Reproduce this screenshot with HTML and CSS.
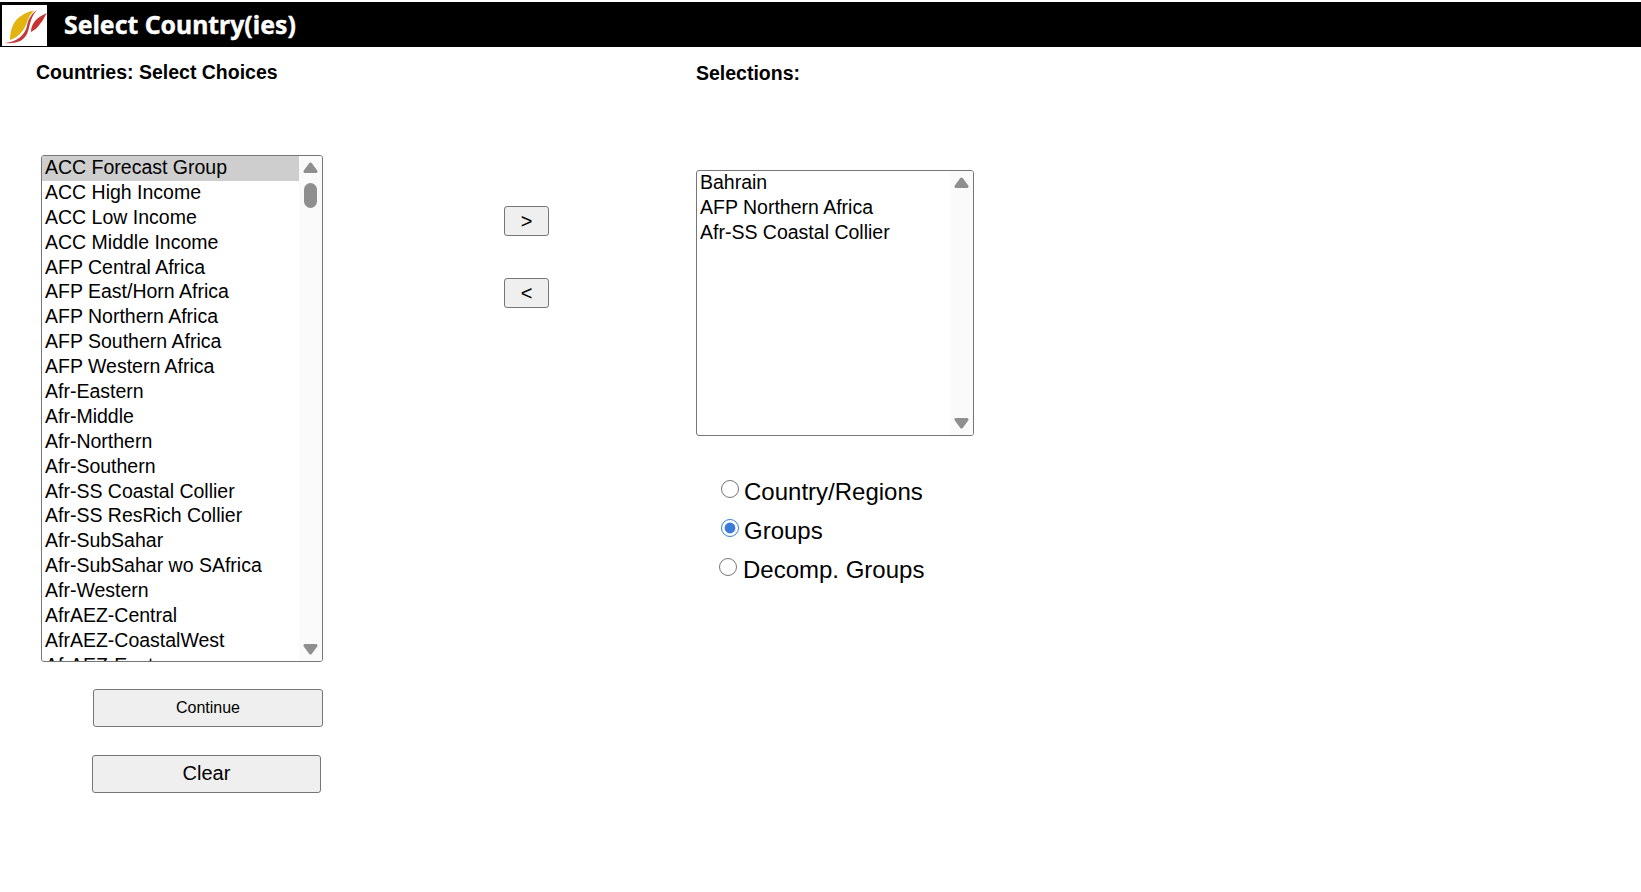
FILE: index.html
```html
<!DOCTYPE html>
<html lang="en">
<head>
<meta charset="utf-8">
<title>Select Country(ies)</title>
<link rel="stylesheet" href="styles.css">
</head>
<body>
<header class="topbar">
  <div class="logo">
    <svg width="45" height="41" viewBox="0 0 45 41">
      <path d="M8 35C8 24 12 15 19 11C23 8 27 6 32 6C27 10 26 15 24 20C21 27 15 33 8 35Z" fill="#e3b30f"/>
      <path d="M3 38C12 39 21 37 25 29C28 23 27 14 35 5C29 9 26 15 25 21C23 30 15 37 3 38Z" fill="#c23a3c"/>
      <path d="M29 27C29 20 33 13 45 8C42 12 41 16 38 19C36 22 33 25 29 27Z" fill="#c8322f"/>
    </svg>
  </div>
  <h1 class="title">Select Country(ies)</h1>
</header>
<main class="content">
  <section class="col-choices">
    <h2 class="heading">Countries: Select Choices</h2>
    <div class="listbox listbox-choices">
      <ul class="options">
        <li class="option selected">ACC Forecast Group</li>
        <li class="option">ACC High Income</li>
        <li class="option">ACC Low Income</li>
        <li class="option">ACC Middle Income</li>
        <li class="option">AFP Central Africa</li>
        <li class="option">AFP East/Horn Africa</li>
        <li class="option">AFP Northern Africa</li>
        <li class="option">AFP Southern Africa</li>
        <li class="option">AFP Western Africa</li>
        <li class="option">Afr-Eastern</li>
        <li class="option">Afr-Middle</li>
        <li class="option">Afr-Northern</li>
        <li class="option">Afr-Southern</li>
        <li class="option">Afr-SS Coastal Collier</li>
        <li class="option">Afr-SS ResRich Collier</li>
        <li class="option">Afr-SubSahar</li>
        <li class="option">Afr-SubSahar wo SAfrica</li>
        <li class="option">Afr-Western</li>
        <li class="option">AfrAEZ-Central</li>
        <li class="option">AfrAEZ-CoastalWest</li>
        <li class="option">AfrAEZ-East</li>
      </ul>
      <div class="scrollbar">
        <svg class="arrow arrow-up" width="15" height="11" viewBox="0 0 15 11"><path d="M7.5 2L13 9.5H2Z" fill="#8f8f8f" stroke="#8f8f8f" stroke-width="3" stroke-linejoin="round"/></svg>
        <div class="thumb"></div>
        <svg class="arrow arrow-down" width="15" height="11" viewBox="0 0 15 11"><path d="M2 1.5H13L7.5 9Z" fill="#8f8f8f" stroke="#8f8f8f" stroke-width="3" stroke-linejoin="round"/></svg>
      </div>
    </div>
    <button class="btn btn-continue" type="button">Continue</button>
    <button class="btn btn-clear" type="button">Clear</button>
  </section>
  <section class="col-move">
    <button class="btn btn-move" type="button">&gt;</button>
    <button class="btn btn-move" type="button">&lt;</button>
  </section>
  <section class="col-selections">
    <h2 class="heading heading-selections">Selections:</h2>
    <div class="listbox listbox-selections">
      <ul class="options">
        <li class="option">Bahrain</li>
        <li class="option">AFP Northern Africa</li>
        <li class="option">Afr-SS Coastal Collier</li>
      </ul>
      <div class="scrollbar">
        <svg class="arrow arrow-up" width="15" height="11" viewBox="0 0 15 11"><path d="M7.5 2L13 9.5H2Z" fill="#8f8f8f" stroke="#8f8f8f" stroke-width="3" stroke-linejoin="round"/></svg>
        <svg class="arrow arrow-down" width="15" height="11" viewBox="0 0 15 11"><path d="M2 1.5H13L7.5 9Z" fill="#8f8f8f" stroke="#8f8f8f" stroke-width="3" stroke-linejoin="round"/></svg>
      </div>
    </div>
    <div class="radios">
      <label class="radio-row"><input class="radio" type="radio" name="kind">Country/Regions</label>
      <label class="radio-row"><input class="radio" type="radio" name="kind" checked>Groups</label>
      <label class="radio-row radio-row-decomp"><input class="radio" type="radio" name="kind">Decomp. Groups</label>
    </div>
  </section>
</main>
</body>
</html>
```
FILE: styles.css
```css
* { box-sizing: border-box; }
html, body { margin: 0; padding: 0; background: #fff; }
body {
  font-family: "Liberation Sans", Arial, sans-serif;
  color: #000;
  padding-top: 2px;
}
.topbar {
  height: 45px;
  background: #000;
  display: flex;
  align-items: center;
  padding-left: 2px;
}
.logo {
  width: 45px;
  height: 41px;
  margin-top: 1px;
  background: #fff;
  display: flex;
}
.title {
  margin: 0 0 1px 17px;
  font-family: "Noto Sans", sans-serif;
  font-weight: 700;
  font-size: 24.8px;
  line-height: 32px;
  color: #fff;
  -webkit-text-stroke: 0.4px #fff;
}
.content {
  display: flex;
  align-items: flex-start;
}
.col-choices {
  width: 504px;
  padding-left: 36px;
  display: flex;
  flex-direction: column;
  flex: none;
}
.heading {
  margin: 0;
  font-size: 19.5px;
  font-weight: 700;
  line-height: 23px;
}
.col-choices .heading { margin-top: 14px; }
.heading-selections { margin-top: 15px; }
.listbox {
  display: flex;
  background: #fff;
  border: 1px solid #767676;
  border-radius: 3px;
  overflow: hidden;
}
.listbox-choices {
  width: 282px;
  height: 507px;
  margin: 71px 0 0 5px;
}
.listbox-selections {
  width: 278px;
  height: 266px;
  margin-top: 85px;
}
.options {
  list-style: none;
  margin: 0;
  padding: 0;
  flex: 1;
  min-width: 0;
}
.option {
  font-size: 19.5px;
  line-height: 22px;
  height: 24.9px;
  padding-left: 3px;
  white-space: nowrap;
}
.selected { background: #cecece; }
.scrollbar {
  width: 23px;
  flex: none;
  background: #fafafa;
  display: flex;
  flex-direction: column;
  align-items: center;
  padding: 6px 0 6px;
}
.arrow { flex: none; }
.arrow-down { margin-top: auto; }
.thumb {
  width: 13px;
  height: 25px;
  margin-top: 10px;
  background: #8f8f8f;
  border-radius: 7px;
}
.btn {
  display: block;
  background: #efefef;
  border: 1px solid #767676;
  border-radius: 3px;
  color: #000;
  font-family: "Liberation Sans", Arial, sans-serif;
  padding: 0;
}
.btn-continue {
  width: 230px;
  height: 38px;
  margin: 27px 0 0 57px;
  font-size: 16px;
}
.btn-clear {
  width: 229px;
  height: 38px;
  margin: 28px 0 0 56px;
  font-size: 20px;
  padding-bottom: 2px;
}
.col-move {
  width: 192px;
  flex: none;
  display: flex;
  flex-direction: column;
  gap: 42px;
  padding-top: 159px;
}
.btn-move {
  width: 45px;
  height: 30px;
  font-size: 20px;
}
.col-selections {
  flex: none;
  display: flex;
  flex-direction: column;
}
.radios {
  display: flex;
  flex-direction: column;
  margin-top: 36px;
  padding-left: 24px;
}
.radio-row {
  display: flex;
  align-items: center;
  font-size: 24px;
  line-height: 39px;
  height: 39px;
}
.radio {
  width: 18px;
  height: 18px;
  margin: 0 5px 5px 1px;
  flex: none;
  accent-color: #3a7bdc;
}
.radio-row-decomp .radio { margin: 0 6px 5px -1px; }
```
